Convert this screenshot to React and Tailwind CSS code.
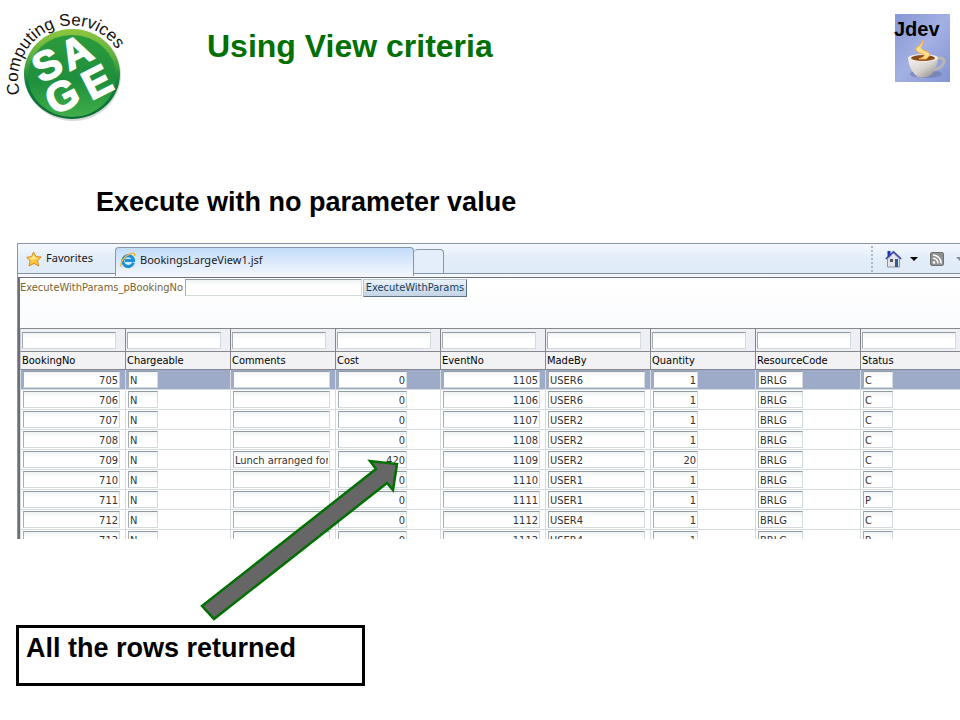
import React from "react";

const columns = [
  { name: "BookingNo", box: "w-[97px] text-right", col: "w-[105px]" },
  { name: "Chargeable", box: "w-[30px]", col: "w-[105px]" },
  { name: "Comments", box: "w-[97px]", col: "w-[105px]" },
  { name: "Cost", box: "w-[69px] text-right", col: "w-[105px]" },
  { name: "EventNo", box: "w-[97px] text-right", col: "w-[105px]" },
  { name: "MadeBy", box: "w-[97px]", col: "w-[105px]" },
  { name: "Quantity", box: "w-[45px] text-right", col: "w-[105px]" },
  { name: "ResourceCode", box: "w-[45px]", col: "w-[105px]" },
  { name: "Status", box: "w-[30px]", col: "" },
];

const rows = [
  ["705", "N", "", "0", "1105", "USER6", "1", "BRLG", "C"],
  ["706", "N", "", "0", "1106", "USER6", "1", "BRLG", "C"],
  ["707", "N", "", "0", "1107", "USER2", "1", "BRLG", "C"],
  ["708", "N", "", "0", "1108", "USER2", "1", "BRLG", "C"],
  ["709", "N", "Lunch arranged for", "420", "1109", "USER2", "20", "BRLG", "C"],
  ["710", "N", "", "0", "1110", "USER1", "1", "BRLG", "C"],
  ["711", "N", "", "0", "1111", "USER1", "1", "BRLG", "P"],
  ["712", "N", "", "0", "1112", "USER4", "1", "BRLG", "C"],
  ["713", "N", "", "0", "1113", "USER4", "1", "BRLG", "P"],
];

function SageLogo() {
  return (
    <svg className="h-[130px] w-[140px] shrink-0" viewBox="0 0 140 130" role="img" aria-label="SAGE Computing Services">
      <defs>
        <linearGradient id="rim" x1="0" y1="0" x2="0" y2="1">
          <stop offset="0" stopColor="#8fc63d" />
          <stop offset="0.3" stopColor="#5fb040" />
          <stop offset="0.6" stopColor="#118040" />
          <stop offset="1" stopColor="#0b6b3a" />
        </linearGradient>
        <linearGradient id="disc" x1="0" y1="0" x2="0" y2="1">
          <stop offset="0" stopColor="#2c9b3d" />
          <stop offset="0.55" stopColor="#1e8f3c" />
          <stop offset="1" stopColor="#3fae49" />
        </linearGradient>
        <path id="arc" d="M20 94 A54 54 0 1 1 124 94" />
      </defs>
      <ellipse cx="73" cy="75" rx="48" ry="46" fill="#d5dcd5" />
      <ellipse cx="72" cy="74" rx="48" ry="45" fill="url(#rim)" />
      <ellipse cx="72" cy="76" rx="44" ry="41" fill="url(#disc)" />
      <text fontFamily="Liberation Sans, Arial, sans-serif" fontSize="17" fill="#111">
        <textPath href="#arc">Computing Services</textPath>
      </text>
      <g
        fontFamily="Liberation Sans, Arial, sans-serif"
        fontWeight="700"
        fontSize="41"
        fill="#fff"
        stroke="#fff"
        strokeWidth="1.5"
        textAnchor="middle"
      >
        <text transform="translate(47 65) rotate(-27)" y="14">S</text>
        <text transform="translate(76 52) rotate(-27)" y="14">A</text>
        <text transform="translate(62 96) rotate(-27)" y="14">G</text>
        <text transform="translate(97 82) rotate(-27)" y="14">E</text>
      </g>
    </svg>
  );
}

function JdevLogo() {
  return (
    <svg className="h-[68px] w-14 shrink-0 overflow-visible" viewBox="0 0 56 68" role="img" aria-label="Jdev">
      <defs>
        <linearGradient id="sky" x1="0" y1="0" x2="1" y2="1">
          <stop offset="0" stopColor="#8796d6" />
          <stop offset="0.5" stopColor="#a3b0e3" />
          <stop offset="1" stopColor="#8394d4" />
        </linearGradient>
        <linearGradient id="cup" x1="0" y1="0" x2="1" y2="1">
          <stop offset="0" stopColor="#f6f3ee" />
          <stop offset="0.5" stopColor="#d9d6d2" />
          <stop offset="1" stopColor="#86807c" />
        </linearGradient>
      </defs>
      <rect width="55" height="68" fill="url(#sky)" />
      <ellipse cx="31" cy="60" rx="16" ry="4" fill="#6f7cae" opacity="0.7" />
      <path d="M40 45 Q49 42 49 48 Q48 54 38 56" fill="none" stroke="#b9b6b6" strokeWidth="3" />
      <path d="M13 44 Q14 57 23 63 Q31 65 37 60 Q42 54 43 44 Z" fill="url(#cup)" />
      <ellipse cx="28" cy="44" rx="15" ry="4" fill="#eeeae4" />
      <ellipse cx="28" cy="44" rx="12" ry="3" fill="#8a4b1a" />
      <path d="M28 26 Q29 30 26 33 Q26 36 33 38 Q37 41 31 45 L24 45 Q32 42 28 40 Q20 38 21 34 Q27 31 28 26 Z" fill="#ffe08a" stroke="#f4b04a" />
      <text x="-1" y="22" fontFamily="Liberation Sans, Arial, sans-serif" fontWeight="700" fontSize="20" fill="#000">Jdev</text>
    </svg>
  );
}

function StarIcon() {
  return (
    <svg className="size-4 shrink-0" viewBox="0 0 16 16" aria-hidden="true">
      <path d="M7.5 1 L10 5.6 L15.2 6 L11.5 9.8 L12.8 15 L8 12.4 L3 15 L4.2 9.8 L.7 6.4 L5.6 5.6 Z" fill="#ffc83d" stroke="#d98a1e" strokeLinejoin="round" />
      <path d="M7.5 3 L9 6.5 L12 7 L6 9 L3 7 L6.2 6.4 Z" fill="#ffeaa0" />
    </svg>
  );
}

function BrowserIcon() {
  return (
    <svg className="size-4 shrink-0" viewBox="0 0 16 16" aria-hidden="true">
      <path d="M13.4 10.6 A5.4 5.4 0 1 1 13.6 8.6 H5" fill="none" stroke="#1b8fd8" strokeWidth="3" />
      <path d="M1.6 14.8 C-1 12 4 4 10 1.8 C13 .6 15.4 1 14.6 4" fill="none" stroke="#f2b32c" strokeWidth="1.4" />
    </svg>
  );
}

function HomeIcon() {
  return (
    <svg className="h-[18px] w-[17px]" viewBox="0 0 17 18" aria-hidden="true">
      <rect x="2.5" y="1" width="3" height="6" fill="#2430a0" />
      <path d="M2.5 9 L8.5 3 L14.5 9 V17 H2.5 Z" fill="#e2e5ea" stroke="#8b93a8" />
      <path d="M.8 9 L8.5 1.8 L16.2 9" fill="none" stroke="#3540a8" strokeWidth="1.5" />
      <rect x="5" y="9" width="3" height="3" fill="#555" />
      <rect x="10" y="9" width="3" height="8" fill="#2d5c94" />
    </svg>
  );
}

function FeedIcon() {
  return (
    <svg className="size-[14px]" viewBox="0 0 14 14" aria-hidden="true">
      <rect x=".5" y=".5" width="13" height="13" rx="1.5" fill="#909090" stroke="#707070" />
      <circle cx="4" cy="10.5" r="1.3" fill="#fff" />
      <path d="M3 6.2 A5 5 0 0 1 8 11.5 M3 3 A8.5 8.5 0 0 1 11.2 11.5" fill="none" stroke="#fff" strokeWidth="1.5" />
    </svg>
  );
}

function Caret({ className }) {
  return (
    <svg className={className} viewBox="0 0 8 4" aria-hidden="true">
      <path d="M0 0 H8 L4 4 Z" fill="currentColor" />
    </svg>
  );
}

function BrowserBar() {
  return (
    <div className="h-[35px] border-t border-b border-t-[#8c96a3] border-b-[#6c6e78] bg-[#f4f7fb]">
      <div className="flex h-[30px] border-b border-[#8494a8] bg-linear-to-b from-[#f3f8fd] via-[#e2edf8] to-[#e0ebf8] font-['Noto_Sans',sans-serif] text-[11px] text-[#1a1a1a]">
        <button type="button" className="flex w-[97px] shrink-0 items-center gap-1 pl-2">
          <StarIcon />
          <span>Favorites</span>
        </button>
        <div className="mt-[3px] flex h-[29px] w-[299px] shrink-0 items-center gap-1 rounded-t border border-b-0 border-[#8796ac] bg-linear-to-b from-[#c3dcfb] to-[#f4f7fb] pb-1 pl-1">
          <BrowserIcon />
          <span>BookingsLargeView1.jsf</span>
        </div>
        <button type="button" aria-label="New tab" className="mt-[5px] h-6 w-[30px] shrink-0 rounded-t border border-b-0 border-l-0 border-[#8796ac] bg-[#e3eefa]" />
        <div className="ml-auto flex shrink-0 items-center">
          <span className="mr-3 h-[26px] border-l-2 border-dotted border-[#a9b9cd]" />
          <button type="button" aria-label="Home"><HomeIcon /></button>
          <button type="button" aria-label="Home options" className="ml-2"><Caret className="h-1 w-2 text-black" /></button>
          <button type="button" aria-label="Feeds" className="ml-3"><FeedIcon /></button>
          <button type="button" aria-label="Feed options" className="ml-3 w-1 overflow-hidden"><Caret className="h-1 w-2 text-[#7d8a99]" /></button>
        </div>
      </div>
    </div>
  );
}

const sunken = "block h-[17px] border border-t-[#8f9aa3] border-l-[#a3acb4] border-r-[#d3dade] border-b-[#d3dade] bg-linear-to-b from-[#f0f3f4] to-white to-40% outline-none";

function BookingsTable() {
  return (
    <table className="w-full table-fixed border-separate border-spacing-0">
      <colgroup>
        {columns.map((c) => (
          <col key={c.name} className={c.col} />
        ))}
      </colgroup>
      <thead className="text-black">
        <tr className="bg-[#eeeff4]">
          {columns.map((c) => (
            <td key={c.name} className="h-[23px] border-t border-l border-[#85878c] p-0 pl-px first:border-l-[#c8ccd4]">
              <input aria-label={`Filter ${c.name}`} className={`${sunken} w-[94px] px-1`} />
            </td>
          ))}
        </tr>
        <tr className="bg-[#f2f2f4]">
          {columns.map((c) => (
            <th key={c.name} scope="col" className="h-[19px] border-t border-b border-l border-[#85878c] p-0 pt-px pl-px text-left leading-4 font-normal first:border-l-[#c8ccd4]">
              {c.name}
            </th>
          ))}
        </tr>
      </thead>
      <tbody className="text-[#333]">
        {rows.map((row, r) => (
          <tr key={row[0]} className={r === 0 ? "bg-[#9dabc9]" : "bg-white"}>
            {row.map((value, i) => (
              <td key={columns[i].name} className="h-5 border-b border-l border-[#d5dcde] p-0 pl-[2px]">
                <input
                  aria-label={`${columns[i].name} ${row[0]}`}
                  defaultValue={value}
                  className={`${sunken} pt-px pr-px pl-px ${columns[i].box}`}
                />
              </td>
            ))}
          </tr>
        ))}
      </tbody>
    </table>
  );
}

export default function App() {
  return (
    <main className="min-h-screen overflow-hidden bg-white font-['Liberation_Sans',Arial,sans-serif] text-black">
      <header className="flex items-start">
        <SageLogo />
        <h1 className="ml-[67px] pt-7 text-[32px] leading-9 font-bold text-[#007000]">Using View criteria</h1>
        <div className="mt-[14px] mr-[9px] ml-auto">
          <JdevLogo />
        </div>
      </header>

      <h2 className="mt-14 ml-24 text-[27px] leading-8 font-bold">Execute with no parameter value</h2>

      <div className="relative mt-[25px] ml-[17px]">
        <section className="h-[296px] overflow-hidden border-l border-[#8c96a3]">
          <BrowserBar />
          <div className="border-l-2 border-[#6c6e78] bg-white font-['DejaVu_Sans_Condensed','DejaVu_Sans',sans-serif] text-[11px]">
            <form className="flex h-[50px] items-start bg-linear-to-b from-white to-[#fafbfd] pt-px" onSubmit={(e) => e.preventDefault()}>
              <label htmlFor="booking" className="w-[165px] leading-[18px] text-[#7b6230]">ExecuteWithParams_pBookingNo</label>
              <input id="booking" className={`${sunken} w-[177px] px-1`} />
              <button type="submit" className="ml-px h-[18px] w-[104px] border border-t-[#b9c7d6] border-r-[#5e6f88] border-b-[#5e6f88] border-l-[#b9c7d6] bg-linear-to-b from-[#eaf2f9] to-[#c2d4e6] leading-4 text-[#173e5c]">
                ExecuteWithParams
              </button>
            </form>
            <BookingsTable />
          </div>
        </section>
        <svg className="pointer-events-none absolute top-[215px] left-[180px] h-[166px] w-[204px]" viewBox="0 0 204 166" aria-hidden="true">
          <path d="M5 148 L179 11 L173 3 L200 6 L196 32 L190 25 L17 161 Z" fill="#666" stroke="#007000" strokeWidth="2.5" />
        </svg>
      </div>

      <p className="mt-[86px] ml-4 h-[61px] w-[349px] border-[3px] border-black pt-1 pl-[7px] text-[27px] leading-8 font-bold">
        All the rows returned
      </p>
    </main>
  );
}
